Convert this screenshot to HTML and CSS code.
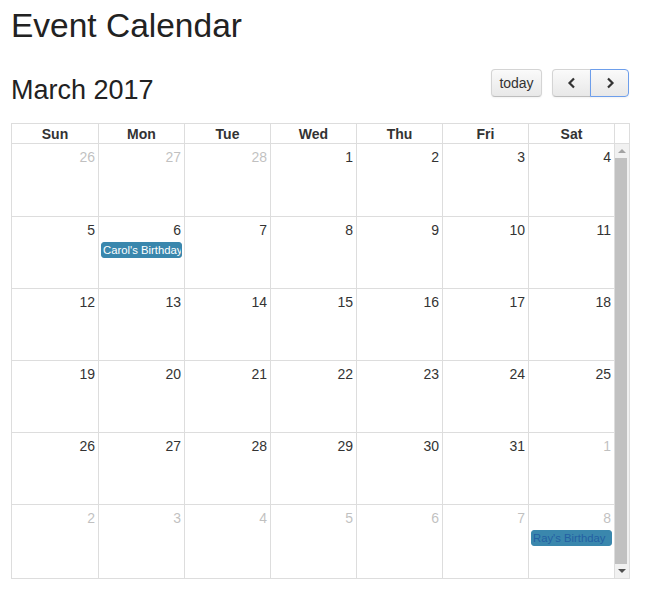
FILE: index.html
```html
<!DOCTYPE html>
<html>

<head>
    <meta charset="utf-8">
    <title>Event Calendar</title>
    <link rel="stylesheet" href="styles.css">
</head>

<body>
    <h1>Event Calendar</h1>
    <div class="toolbar">
        <h2>March 2017</h2>
        <div class="right">
            <button class="btn today">today</button>
            <div class="group">
                <button class="btn prev"><svg width="10" height="12" viewBox="0 0 10 12"><path d="M7 1.5 L2.5 6 L7 10.5" fill="none" stroke="#333" stroke-width="2.2"/></svg></button>
                <button class="btn next"><svg width="10" height="12" viewBox="0 0 10 12"><path d="M3 1.5 L7.5 6 L3 10.5" fill="none" stroke="#333" stroke-width="2.2"/></svg></button>
            </div>
        </div>
    </div>
    <div class="cal">
        <div class="head">Sun</div>
        <div class="head">Mon</div>
        <div class="head">Tue</div>
        <div class="head">Wed</div>
        <div class="head">Thu</div>
        <div class="head">Fri</div>
        <div class="head">Sat</div>
        <div class="head"></div>

        <div class="day other"><span class="num">26</span></div>
        <div class="day other"><span class="num">27</span></div>
        <div class="day other"><span class="num">28</span></div>
        <div class="day"><span class="num">1</span></div>
        <div class="day"><span class="num">2</span></div>
        <div class="day"><span class="num">3</span></div>
        <div class="day"><span class="num">4</span></div>
        <div class="scroll">
            <div class="arrow up"></div>
            <div class="thumb"></div>
            <div class="arrow down"></div>
        </div>

        <div class="day"><span class="num">5</span></div>
        <div class="day"><span class="num">6</span><div class="event">Carol's Birthday</div></div>
        <div class="day"><span class="num">7</span></div>
        <div class="day"><span class="num">8</span></div>
        <div class="day"><span class="num">9</span></div>
        <div class="day"><span class="num">10</span></div>
        <div class="day"><span class="num">11</span></div>

        <div class="day"><span class="num">12</span></div>
        <div class="day"><span class="num">13</span></div>
        <div class="day"><span class="num">14</span></div>
        <div class="day"><span class="num">15</span></div>
        <div class="day"><span class="num">16</span></div>
        <div class="day"><span class="num">17</span></div>
        <div class="day"><span class="num">18</span></div>

        <div class="day"><span class="num">19</span></div>
        <div class="day"><span class="num">20</span></div>
        <div class="day"><span class="num">21</span></div>
        <div class="day"><span class="num">22</span></div>
        <div class="day"><span class="num">23</span></div>
        <div class="day"><span class="num">24</span></div>
        <div class="day"><span class="num">25</span></div>

        <div class="day"><span class="num">26</span></div>
        <div class="day"><span class="num">27</span></div>
        <div class="day"><span class="num">28</span></div>
        <div class="day"><span class="num">29</span></div>
        <div class="day"><span class="num">30</span></div>
        <div class="day"><span class="num">31</span></div>
        <div class="day other"><span class="num">1</span></div>

        <div class="day other"><span class="num">2</span></div>
        <div class="day other"><span class="num">3</span></div>
        <div class="day other"><span class="num">4</span></div>
        <div class="day other"><span class="num">5</span></div>
        <div class="day other"><span class="num">6</span></div>
        <div class="day other"><span class="num">7</span></div>
        <div class="day other"><span class="num">8</span><div class="event link">Ray's Birthday</div></div>
    </div>
</body>

</html>
```
FILE: styles.css
```css
body {
    margin: 0;
    padding: 5px 21px 0 11px;
    background-color: #FFF;
    color: #333;
    font-family: "Liberation Sans", Arial, sans-serif;
    font-size: 14px;
}

h1 {
    margin: 0 0 23px;
    font-size: 33.5px;
    line-height: 41px;
    font-weight: normal;
    color: #222;
}

.toolbar {
    display: flex;
    justify-content: space-between;
    align-items: flex-start;
    margin-bottom: 17px;
}

.toolbar h2 {
    margin: 5px 0 0;
    font-size: 27px;
    line-height: 32px;
    font-weight: normal;
    color: #222;
}

.toolbar .right {
    display: flex;
    gap: 10px;
}

.group {
    display: flex;
}

.btn {
    height: 28px;
    padding: 0 8px;
    margin: 0;
    font-family: "Liberation Sans", Arial, sans-serif;
    font-size: 14px;
    color: #333;
    background: linear-gradient(#fafafa, #e8e8e8);
    border: 1px solid #d4d4d4;
    border-bottom-color: #bdbdbd;
    border-radius: 4px;
    box-shadow: inset 0 1px 0 rgba(255, 255, 255, .3), 0 1px 2px rgba(0, 0, 0, .05);
    display: flex;
    align-items: center;
    justify-content: center;
}

.today {
    width: 51px;
}

.prev,
.next {
    width: 39px;
}

.prev {
    border-radius: 4px 0 0 4px;
}

.next {
    border-radius: 0 4px 4px 0;
    margin-left: -1px;
    border-color: #6d9eeb;
}

.cal {
    display: grid;
    grid-template-columns: 86px repeat(6, 85px) 14px;
    grid-template-rows: 19px 72px 71px 71px 71px 71px 73px;
    gap: 1px;
    width: 617px;
    background-color: #ddd;
    border: 1px solid #ddd;
}

.head {
    background-color: #FFF;
    font-weight: bold;
    text-align: center;
    line-height: 20px;
}

.day {
    background-color: #FFF;
    padding-top: 3px;
    text-align: right;
    overflow: hidden;
}

.num {
    display: block;
    padding-right: 3px;
    line-height: 20px;
}

.other .num {
    opacity: .3;
}

.event {
    margin: 2px 2px 0 2px;
    padding: 0 1px;
    text-align: left;
    font-size: 11.3px;
    line-height: 14px;
    color: #FFF;
    background-color: #3a87ad;
    border: 1px solid #3a87ad;
    border-radius: 3px;
    white-space: nowrap;
    overflow: hidden;
}

.event.link {
    color: #245fa3;
}

.scroll {
    grid-row: 2 / 8;
    grid-column: 8;
    background-color: #f1f1f1;
    display: flex;
    flex-direction: column;
}

.thumb {
    flex: 1;
    margin-right: 2px;
    background-color: #c1c1c1;
}

.arrow {
    height: 14px;
    display: flex;
    align-items: center;
    justify-content: center;
}

.arrow::after {
    content: "";
    border-left: 4px solid transparent;
    border-right: 4px solid transparent;
}

.arrow.up::after {
    border-bottom: 4px solid #a3a3a3;
}

.arrow.down::after {
    border-top: 4px solid #505050;
}
```
